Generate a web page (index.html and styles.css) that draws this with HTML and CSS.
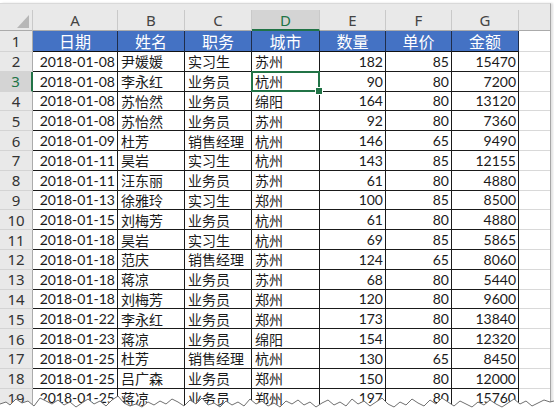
FILE: index.html
```html
<!DOCTYPE html>
<html lang="zh-CN">
<head>
<meta charset="utf-8">
<link rel="stylesheet" href="styles.css">
</head>
<body>
<div class="frame">
  <div class="topband"></div>
  <div class="grid">
    <div class="ch corner"><svg width="33" height="21" viewBox="0 0 33 21"><polygon points="17,18 29,18 29,5" fill="#b7b7b7"/></svg></div>
    <div class="ch">A</div><div class="ch">B</div><div class="ch">C</div><div class="ch ch-sel">D</div><div class="ch">E</div><div class="ch">F</div><div class="ch">G</div><div class="ch ch-last"></div>

    <div class="rh r1">1</div><div class="hd">日期</div><div class="hd">姓名</div><div class="hd">职务</div><div class="hd">城市</div><div class="hd">数量</div><div class="hd">单价</div><div class="hd">金额</div><div class="ex r1"></div>

    <div class="rh">2</div><div class="c n">2018-01-08</div><div class="c">尹媛媛</div><div class="c">实习生</div><div class="c">苏州</div><div class="c n">182</div><div class="c n">85</div><div class="c n">15470</div><div class="ex"></div>
    <div class="rh rh-sel">3</div><div class="c n">2018-01-08</div><div class="c">李永红</div><div class="c">业务员</div><div class="c sel">杭州</div><div class="c n">90</div><div class="c n">80</div><div class="c n">7200</div><div class="ex"></div>
    <div class="rh">4</div><div class="c n">2018-01-08</div><div class="c">苏怡然</div><div class="c">业务员</div><div class="c">绵阳</div><div class="c n">164</div><div class="c n">80</div><div class="c n">13120</div><div class="ex"></div>
    <div class="rh">5</div><div class="c n">2018-01-08</div><div class="c">苏怡然</div><div class="c">业务员</div><div class="c">苏州</div><div class="c n">92</div><div class="c n">80</div><div class="c n">7360</div><div class="ex"></div>
    <div class="rh">6</div><div class="c n">2018-01-09</div><div class="c">杜芳</div><div class="c">销售经理</div><div class="c">杭州</div><div class="c n">146</div><div class="c n">65</div><div class="c n">9490</div><div class="ex"></div>
    <div class="rh">7</div><div class="c n">2018-01-11</div><div class="c">昊岩</div><div class="c">实习生</div><div class="c">杭州</div><div class="c n">143</div><div class="c n">85</div><div class="c n">12155</div><div class="ex"></div>
    <div class="rh">8</div><div class="c n">2018-01-11</div><div class="c">汪东丽</div><div class="c">业务员</div><div class="c">苏州</div><div class="c n">61</div><div class="c n">80</div><div class="c n">4880</div><div class="ex"></div>
    <div class="rh">9</div><div class="c n">2018-01-13</div><div class="c">徐雅玲</div><div class="c">实习生</div><div class="c">郑州</div><div class="c n">100</div><div class="c n">85</div><div class="c n">8500</div><div class="ex"></div>
    <div class="rh">10</div><div class="c n">2018-01-15</div><div class="c">刘梅芳</div><div class="c">业务员</div><div class="c">杭州</div><div class="c n">61</div><div class="c n">80</div><div class="c n">4880</div><div class="ex"></div>
    <div class="rh">11</div><div class="c n">2018-01-18</div><div class="c">昊岩</div><div class="c">实习生</div><div class="c">杭州</div><div class="c n">69</div><div class="c n">85</div><div class="c n">5865</div><div class="ex"></div>
    <div class="rh">12</div><div class="c n">2018-01-18</div><div class="c">范庆</div><div class="c">销售经理</div><div class="c">苏州</div><div class="c n">124</div><div class="c n">65</div><div class="c n">8060</div><div class="ex"></div>
    <div class="rh">13</div><div class="c n">2018-01-18</div><div class="c">蒋凉</div><div class="c">业务员</div><div class="c">苏州</div><div class="c n">68</div><div class="c n">80</div><div class="c n">5440</div><div class="ex"></div>
    <div class="rh">14</div><div class="c n">2018-01-18</div><div class="c">刘梅芳</div><div class="c">业务员</div><div class="c">郑州</div><div class="c n">120</div><div class="c n">80</div><div class="c n">9600</div><div class="ex"></div>
    <div class="rh">15</div><div class="c n">2018-01-22</div><div class="c">李永红</div><div class="c">业务员</div><div class="c">郑州</div><div class="c n">173</div><div class="c n">80</div><div class="c n">13840</div><div class="ex"></div>
    <div class="rh">16</div><div class="c n">2018-01-23</div><div class="c">蒋凉</div><div class="c">业务员</div><div class="c">绵阳</div><div class="c n">154</div><div class="c n">80</div><div class="c n">12320</div><div class="ex"></div>
    <div class="rh">17</div><div class="c n">2018-01-25</div><div class="c">杜芳</div><div class="c">销售经理</div><div class="c">杭州</div><div class="c n">130</div><div class="c n">65</div><div class="c n">8450</div><div class="ex"></div>
    <div class="rh">18</div><div class="c n">2018-01-25</div><div class="c">吕广森</div><div class="c">业务员</div><div class="c">郑州</div><div class="c n">150</div><div class="c n">80</div><div class="c n">12000</div><div class="ex"></div>
    <div class="rh">19</div><div class="c n">2018-01-25</div><div class="c">蒋凉</div><div class="c">业务员</div><div class="c">郑州</div><div class="c n">197</div><div class="c n">80</div><div class="c n">15760</div><div class="ex"></div>
  </div>
</div>
<svg class="tear" width="554" height="417" viewBox="0 0 554 417">
  <path class="tear-shadow" d="M0,406 L6,404 L10,407 L16,401 L22,405 L28,403 L34,408 L40,400 L46,403 L52,406 L58,402 L64,407 L70,404 L76,409 L82,405 L88,401 L94,406 L100,403 L106,408 L112,402 L118,398 L124,405 L130,408 L136,406 L142,409 L148,404 L154,407 L160,403 L166,406 L172,401 L178,404 L184,408 L190,402 L196,406 L202,400 L208,407 L214,405 L220,409 L226,403 L232,407 L238,404 L244,408 L250,401 L256,406 L262,403 L268,408 L274,405 L280,409 L286,403 L292,406 L298,402 L304,407 L310,404 L316,409 L322,405 L328,402 L334,407 L340,404 L346,408 L352,401 L358,406 L364,403 L370,408 L376,404 L382,400 L388,406 L394,409 L400,404 L406,407 L412,401 L418,405 L424,408 L430,402 L436,406 L442,400 L448,404 L454,408 L460,403 L466,406 L472,409 L478,404 L484,407 L490,402 L496,406 L502,409 L508,405 L514,401 L520,406 L526,403 L532,408 L538,405 L544,402 L550,404 L554,403"/>
  <path class="tear-fill" d="M0,404 L6,402 L10,405 L16,399 L22,403 L28,401 L34,406 L40,398 L46,401 L52,404 L58,400 L64,405 L70,402 L76,407 L82,403 L88,399 L94,404 L100,401 L106,406 L112,400 L118,396 L124,403 L130,406 L136,404 L142,407 L148,402 L154,405 L160,401 L166,404 L172,399 L178,402 L184,406 L190,400 L196,404 L202,398 L208,405 L214,403 L220,407 L226,401 L232,405 L238,402 L244,406 L250,399 L256,404 L262,401 L268,406 L274,403 L280,407 L286,401 L292,404 L298,400 L304,405 L310,402 L316,407 L322,403 L328,400 L334,405 L340,402 L346,406 L352,399 L358,404 L364,401 L370,406 L376,402 L382,398 L388,404 L394,407 L400,402 L406,405 L412,399 L418,403 L424,406 L430,400 L436,404 L442,398 L448,402 L454,406 L460,401 L466,404 L472,407 L478,402 L484,405 L490,400 L496,404 L502,407 L508,403 L514,399 L520,404 L526,401 L532,406 L538,403 L544,400 L550,402 L554,401 L554,417 L0,417 Z"/>
  <path class="tear-line" d="M0,404 L6,402 L10,405 L16,399 L22,403 L28,401 L34,406 L40,398 L46,401 L52,404 L58,400 L64,405 L70,402 L76,407 L82,403 L88,399 L94,404 L100,401 L106,406 L112,400 L118,396 L124,403 L130,406 L136,404 L142,407 L148,402 L154,405 L160,401 L166,404 L172,399 L178,402 L184,406 L190,400 L196,404 L202,398 L208,405 L214,403 L220,407 L226,401 L232,405 L238,402 L244,406 L250,399 L256,404 L262,401 L268,406 L274,403 L280,407 L286,401 L292,404 L298,400 L304,405 L310,402 L316,407 L322,403 L328,400 L334,405 L340,402 L346,406 L352,399 L358,404 L364,401 L370,406 L376,402 L382,398 L388,404 L394,407 L400,402 L406,405 L412,399 L418,403 L424,406 L430,400 L436,404 L442,398 L448,402 L454,406 L460,401 L466,404 L472,407 L478,402 L484,405 L490,400 L496,404 L502,407 L508,403 L514,399 L520,404 L526,401 L532,406 L538,403 L544,400 L550,402 L554,401"/>
</svg>
</body>
</html>
```

FILE: styles.css
```css
* { box-sizing: border-box; }
html, body { margin: 0; padding: 0; background: #fff; }
body {
  width: 554px;
  height: 417px;
  overflow: hidden;
  position: relative;
  font-family: Lato, "Noto Sans CJK SC", sans-serif;
  font-size: 14px;
  color: #1a1a1a;
}
.frame {
  margin-top: 3px;
  width: 551px;
  border-right: 1px solid #a6a6a6;
  border-top: 1px solid #d9d9d9;
  box-shadow: 2px 0 2px rgba(0,0,0,0.12);
}
.topband {
  height: 6px;
  background: #e9e9e9;
}
.grid {
  display: grid;
  grid-template-columns: 33px 85px 67px 67px 68px 66px 66px 67px 31px;
  grid-template-rows: 21px 21px repeat(18, 19.8px);
}
.ch {
  background: #e9e9e9;
  border-right: 1px solid #c9c9c9;
  border-bottom: 1px solid #ababab;
  color: #444;
  font-size: 15px;
  display: flex;
  align-items: center;
  justify-content: center;
  font-family: "Noto Sans", sans-serif;
}
.ch-last { border-right: none; }
.corner { position: relative; }
.corner svg { position: absolute; left: 0; top: 0; }
.ch-sel {
  background: #d4d4d4;
  color: #217346;
  border-bottom: 2px solid #217346;
}
.rh {
  background: #e9e9e9;
  border-right: 1px solid #ababab;
  border-bottom: 1px solid #d4d4d4;
  color: #333;
  font-size: 15px;
  display: flex;
  align-items: center;
  justify-content: center;
  font-family: "Noto Sans", sans-serif;
}
.rh-sel {
  background: #d4d4d4;
  color: #217346;
  border-right: 2px solid #217346;
}
.hd {
  background: #4472c4;
  color: #fff;
  font-size: 16px;
  border-right: 1px solid #1f2d4a;
  border-bottom: 1px solid #111;
  display: flex;
  align-items: center;
  justify-content: center;
  font-family: "Noto Sans CJK SC", sans-serif;
}
.c {
  border-right: 1px solid #1a1a1a;
  border-bottom: 1px solid #1a1a1a;
  display: flex;
  align-items: center;
  padding: 0 3px;
  white-space: nowrap;
  overflow: hidden;
}
.n { justify-content: flex-end; padding-right: 2px; }
.ex {
  border-bottom: 1px solid #d9d9d9;
}
.sel { position: relative; overflow: visible; }
.sel::after {
  content: "";
  position: absolute;
  left: -1px; top: -1px; right: -1px; bottom: -1px;
  border: 2px solid #217346;
}
.sel::before {
  content: "";
  position: absolute;
  right: -4px; bottom: -4px;
  width: 6px; height: 6px;
  background: #217346;
  border: 1px solid #fff;
  z-index: 2;
}
.tear {
  position: absolute;
  left: 0; top: 0;
  pointer-events: none;
}
.tear-shadow { fill: none; stroke: #cfcfcf; stroke-width: 2; }
.tear-fill { fill: #fff; }
.tear-line { fill: none; stroke: #707070; stroke-width: 1; }
```
